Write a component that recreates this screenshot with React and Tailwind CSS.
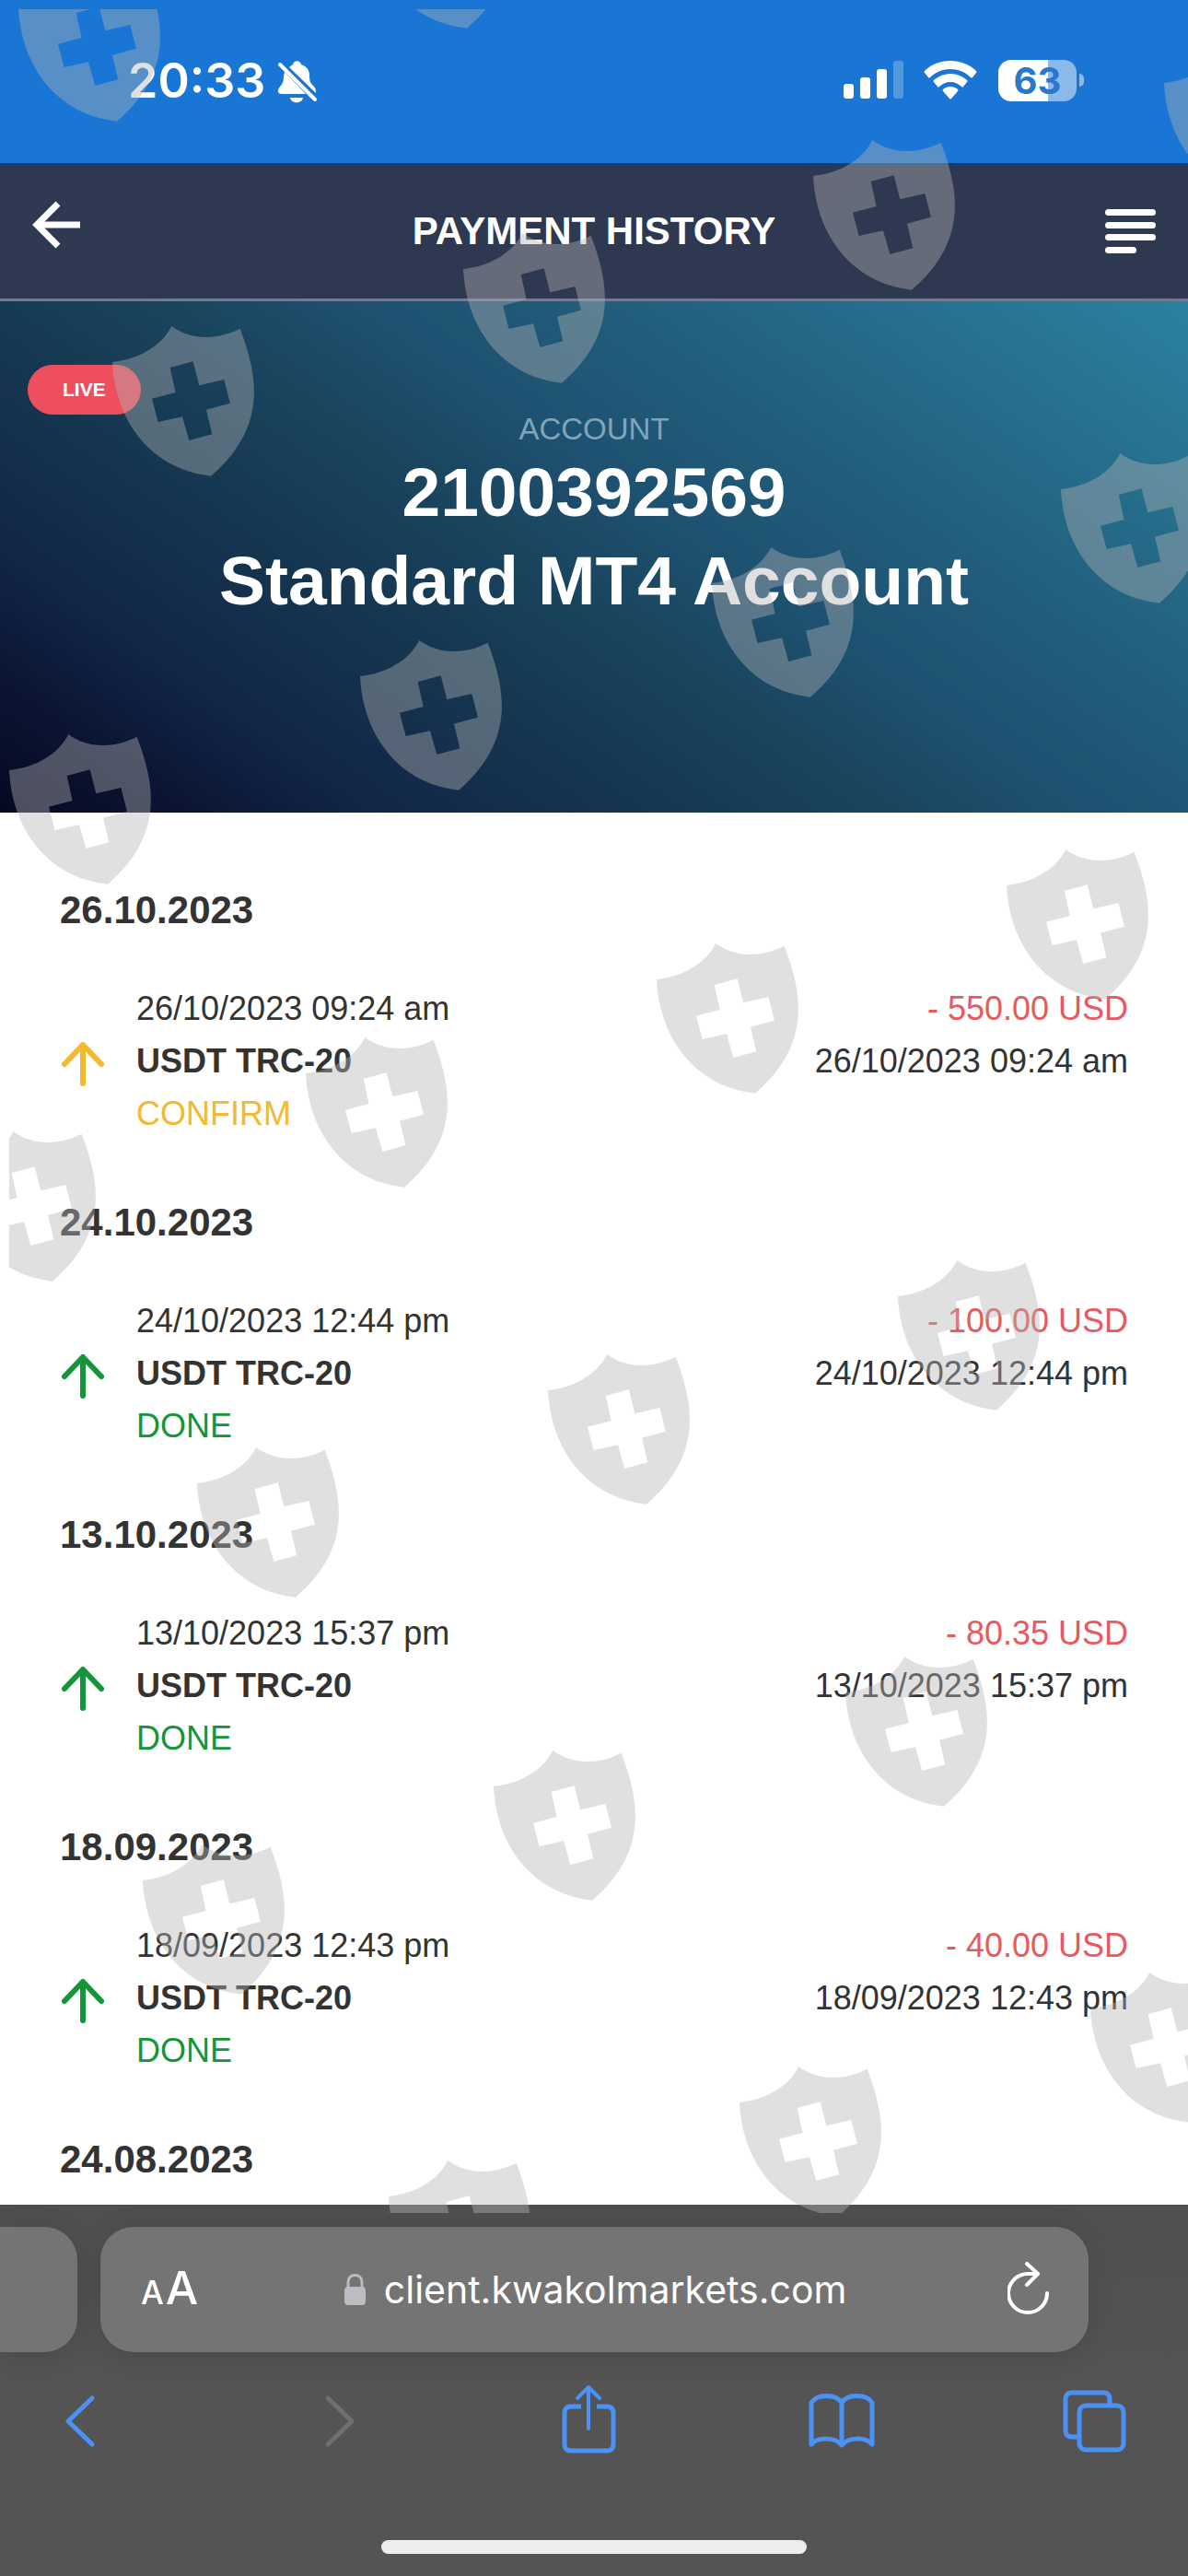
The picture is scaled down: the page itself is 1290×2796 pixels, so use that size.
import React from 'react';

const payments = [
  { day: '26.10.2023', time: '26/10/2023 09:24 am', amount: '- 550.00 USD', status: 'CONFIRM' },
  { day: '24.10.2023', time: '24/10/2023 12:44 pm', amount: '- 100.00 USD', status: 'DONE' },
  { day: '13.10.2023', time: '13/10/2023 15:37 pm', amount: '- 80.35 USD', status: 'DONE' },
  { day: '18.09.2023', time: '18/09/2023 12:43 pm', amount: '- 40.00 USD', status: 'DONE' },
];

const statusColors = {
  CONFIRM: 'text-[#f3b92f]',
  DONE: 'text-[#15953a]',
};

// top left corner of every shield in the overlay
const shields = [
  [400, -132], [20, -31],
  [1264, 51], [883, 152], [503, 253], [122, 354],
  [1152, 492], [773, 594], [391, 695], [10, 797],
  [1093, 922], [713, 1024], [332, 1126], [-50, 1228],
  [975, 1368], [595, 1470], [214, 1571],
  [918, 1798], [536, 1900], [155, 2002],
  [1184, 2141], [803, 2243], [422, 2345],
];

function ShieldOverlay() {
  return (
    <div className="pointer-events-none absolute top-[10px] left-[10px] right-0 h-[2392px] overflow-hidden">
      <svg className="h-full w-full" aria-hidden="true">
        <defs>
          <path
            id="shield"
            fillRule="evenodd"
            transform="scale(0.3333)"
            d="M0 117C85 108 160 66 193 0C248 42 335 50 416 8C476 165 505 330 321 488C120 466 8 302 0 117ZM188 135L263 115L283 193L364 174L384 251L306 272L325 352L250 372L228 295L149 312L129 236L206 216Z"
          />
        </defs>
        {shields.map(([x, y]) => (
          <use
            key={`${x}-${y}`}
            href="#shield"
            x={x - 10}
            y={y - 10}
            fill="rgb(180 180 180)"
            fillOpacity="0.41"
          />
        ))}
      </svg>
    </div>
  );
}

function StatusBar() {
  return (
    <div className="flex h-[177px] items-start justify-between bg-[#1976d5] pt-[60px] pr-[113px] pl-[139px] font-[Inter,sans-serif] text-white">
      <div className="flex h-[56px] items-center gap-[13px]">
        <span className="text-[52px] leading-[56px] font-semibold">20:33</span>
        <svg width="44" height="50" viewBox="0 0 44 50" fill="currentColor">
          <path d="M13 10C15 8 16 8 17 7C18 2 25 2 26 7C32 9 35 13 35 19C35 25 36 27 39 30C42 33 42 35 42 38Z" />
          <path d="M8 15L31 39H5C0 39 0 35 3 31C6 28 7 25 7 20Z" />
          <path d="M14 43H28C27 50 15 50 14 43Z" />
          <path d="M3 7L41 45" stroke="currentColor" strokeWidth="4" strokeLinecap="round" />
        </svg>
      </div>
      <div className="flex h-[54px] items-center">
        <svg width="66" height="42" viewBox="0 0 66 42" fill="currentColor">
          <rect x="0" y="25" width="11" height="16" rx="3" />
          <rect x="18" y="18" width="11" height="23" rx="3" />
          <rect x="36" y="9" width="11" height="32" rx="3" />
          <rect x="54" y="0" width="11" height="41" rx="3" opacity="0.25" />
        </svg>
        <svg className="ml-[21px]" width="58" height="42" viewBox="0 0 58 42" fill="currentColor">
          <path d="M29 0C40 0 50 4 57 11Q58 12 57 13L53 18Q52 19 51 18C45 12 37 9 29 9C21 9 13 12 7 18Q6 19 5 18L1 13Q0 12 1 11C8 4 18 0 29 0Z" />
          <path d="M29 14C36 14 42 17 47 21Q48 22 47 23L43 28Q42 29 41 28C38 25 34 23 29 23C24 23 20 25 17 28Q16 29 15 28L11 23Q10 22 11 21C16 17 22 14 29 14Z" />
          <path d="M29 28C32 28 35 29 37 31Q38 32 37 33L30 41Q29 42 28 41L21 33Q20 32 21 31C23 29 26 28 29 28Z" />
        </svg>
        <div className="ml-[23px] flex h-[45px] w-[85px] items-center justify-center rounded-[14px] bg-[linear-gradient(to_right,#ffffff_54px,#8bbaea_54px)] text-[40px] leading-[45px] font-bold text-[#2a77cb]">
          63
        </div>
        <div className="ml-[3px] h-[14px] w-[5px] rounded-r-full bg-[#8bbaea]" />
      </div>
    </div>
  );
}

function TitleBar() {
  return (
    <header className="flex h-[150px] items-center justify-between border-b-[3px] border-[#6d7b97] bg-[linear-gradient(#203a63_5px,#2e3850_5px)] px-[35px] text-white">
      <button aria-label="Back">
        <svg width="55" height="66" viewBox="0 0 55 66" fill="none" stroke="currentColor" strokeWidth="7">
          <path d="M52 26H5M28 3L5 26L28 49" />
        </svg>
      </button>
      <h1 className="text-[42px] leading-[48px] font-bold">PAYMENT HISTORY</h1>
      <button aria-label="Menu">
        <svg width="55" height="48" viewBox="0 0 55 48" fill="currentColor">
          <rect y="0" width="55" height="7" rx="3.5" />
          <rect y="14" width="55" height="7" rx="3.5" />
          <rect y="27" width="55" height="7" rx="3.5" />
          <rect y="41" width="34" height="7" rx="3.5" />
        </svg>
      </button>
    </header>
  );
}

function AccountHero() {
  return (
    <section className="bg-[linear-gradient(35deg,#060822_0%,#0b1533_10%,#122648_20%,#15354f_33%,#1a4660_48%,#1e5070_56%,#215c7a_68%,#26708e_85%,#2b819f_100%)] pt-[69px] pb-[204px] text-center">
      <div className="flex px-[30px]">
        <span className="rounded-full bg-[#ee4f5f] px-[38px] text-[21px] leading-[54px] font-bold text-white">LIVE</span>
      </div>
      <p className="text-[33px] leading-[32px] text-[#7fa5bb]">ACCOUNT</p>
      <h2 className="mt-[4px] text-[75px] leading-[96px] font-bold text-white">
        2100392569
        <br />
        Standard MT4 Account
      </h2>
    </section>
  );
}

function Payment({ payment }) {
  const color = statusColors[payment.status];

  return (
    <li>
      <h3 className="text-[42px] leading-[48px] font-bold">{payment.day}</h3>
      <div className="mt-[54px] mb-[66px] flex items-center text-[36px] leading-[57px]">
        <svg
          className={color}
          width="50"
          height="56"
          viewBox="0 0 50 56"
          fill="none"
          stroke="currentColor"
          strokeWidth="6"
          strokeLinecap="round"
          strokeLinejoin="round"
        >
          <path d="M25 52V10M5 31L25 10L45 31" />
        </svg>
        <div className="ml-[33px] flex-1">
          <p>{payment.time}</p>
          <p className="font-bold">USDT TRC-20</p>
          <p className={color}>{payment.status}</p>
        </div>
        <div className="self-start text-right">
          <p className="text-[#e65a60]">{payment.amount}</p>
          <p>{payment.time}</p>
        </div>
      </div>
    </li>
  );
}

function BrowserBar() {
  return (
    <footer className="bg-[linear-gradient(#4f4f4f,#545454_50%)] pt-6 pb-6 font-[Inter,sans-serif]">
      <div className="flex gap-[25px] pr-[108px] text-white">
        <div className="h-[136px] w-[84px] rounded-r-[36px] bg-[#747474] shadow-[0_4px_30px_rgba(0,0,0,0.12)]" />
        <div className="flex h-[136px] flex-1 items-center justify-between rounded-[36px] bg-[#747474] pr-[42px] pl-[44px] shadow-[0_4px_30px_rgba(0,0,0,0.12)]">
          <button className="flex items-baseline gap-[2px] font-medium" aria-label="Page settings">
            <span className="text-[35px] leading-[54px]">A</span>
            <span className="text-[50px] leading-[54px]">A</span>
          </button>
          <button className="flex items-center gap-[20px] text-[41px] leading-[54px]">
            <svg width="23" height="36" viewBox="0 0 23 36">
              <path d="M4 17V10C4 0 19 0 19 10V17" fill="none" stroke="#bdbcc2" strokeWidth="3" />
              <rect y="15" width="23" height="20" rx="4" fill="#bdbcc2" />
            </svg>
            client.kwakolmarkets.com
          </button>
          <button className="flex w-[62px] justify-end" aria-label="Reload">
            <svg
              width="46"
              height="60"
              viewBox="0 0 46 60"
              fill="none"
              stroke="currentColor"
              strokeWidth="4"
              strokeLinecap="round"
              strokeLinejoin="round"
            >
              <path d="M43 34A21 21 0 1 1 22 13H32M21 2L33 13L21 25" />
            </svg>
          </button>
        </div>
      </div>
      <nav className="mt-[33px] flex justify-between pr-16 pl-12 text-[#4a92f5]">
        <button aria-label="Go back">
          <svg width="76" height="80" viewBox="0 0 76 80" fill="none" stroke="currentColor" strokeWidth="5" strokeLinecap="round" strokeLinejoin="round">
            <path d="M52 17L26 42L52 67" />
          </svg>
        </button>
        <button aria-label="Go forward" className="text-[#6f6f6f]">
          <svg width="76" height="80" viewBox="0 0 76 80" fill="none" stroke="currentColor" strokeWidth="5" strokeLinecap="round" strokeLinejoin="round">
            <path d="M32 17L58 42L32 67" />
          </svg>
        </button>
        <button aria-label="Share">
          <svg width="76" height="80" viewBox="0 0 76 80" fill="none" stroke="currentColor" strokeWidth="5" strokeLinejoin="round">
            <path d="M32 26H21Q14 26 14 33V67Q14 74 21 74H60Q67 74 67 67V33Q67 26 60 26H49" />
            <path d="M40 50V6M28 17L40 5L52 17" strokeWidth="4" strokeLinecap="round" />
          </svg>
        </button>
        <button aria-label="Bookmarks">
          <svg width="76" height="80" viewBox="0 0 76 80" fill="none" stroke="currentColor" strokeWidth="5" strokeLinejoin="round">
            <path d="M39 22C33 12 12 12 6 22V67C13 59 32 59 39 68C46 59 65 59 72 67V22C66 12 45 12 39 22V67" />
          </svg>
        </button>
        <button aria-label="Tabs">
          <svg width="76" height="80" viewBox="0 0 76 80" fill="none" stroke="currentColor" strokeWidth="5">
            <rect x="22" y="25" width="48" height="48" rx="7" />
            <path d="M21 59H14Q7 59 7 52V18Q7 11 14 11H48Q55 11 55 18V25" />
          </svg>
        </button>
      </nav>
      <div className="mx-auto mt-[91px] h-[15px] w-[462px] rounded-full bg-[#ededed]" />
    </footer>
  );
}

export default function App() {
  return (
    <div className="relative overflow-hidden bg-white font-['Liberation_Sans',Arial,sans-serif] text-[#333333]">
      <StatusBar />
      <TitleBar />
      <AccountHero />
      <main className="px-[65px] pt-[82px] pb-[25px]">
        <ul>
          {payments.map((payment) => (
            <Payment key={payment.day} payment={payment} />
          ))}
        </ul>
        <h3 className="text-[42px] leading-[48px] font-bold">24.08.2023</h3>
      </main>
      <BrowserBar />
      <ShieldOverlay />
    </div>
  );
}
